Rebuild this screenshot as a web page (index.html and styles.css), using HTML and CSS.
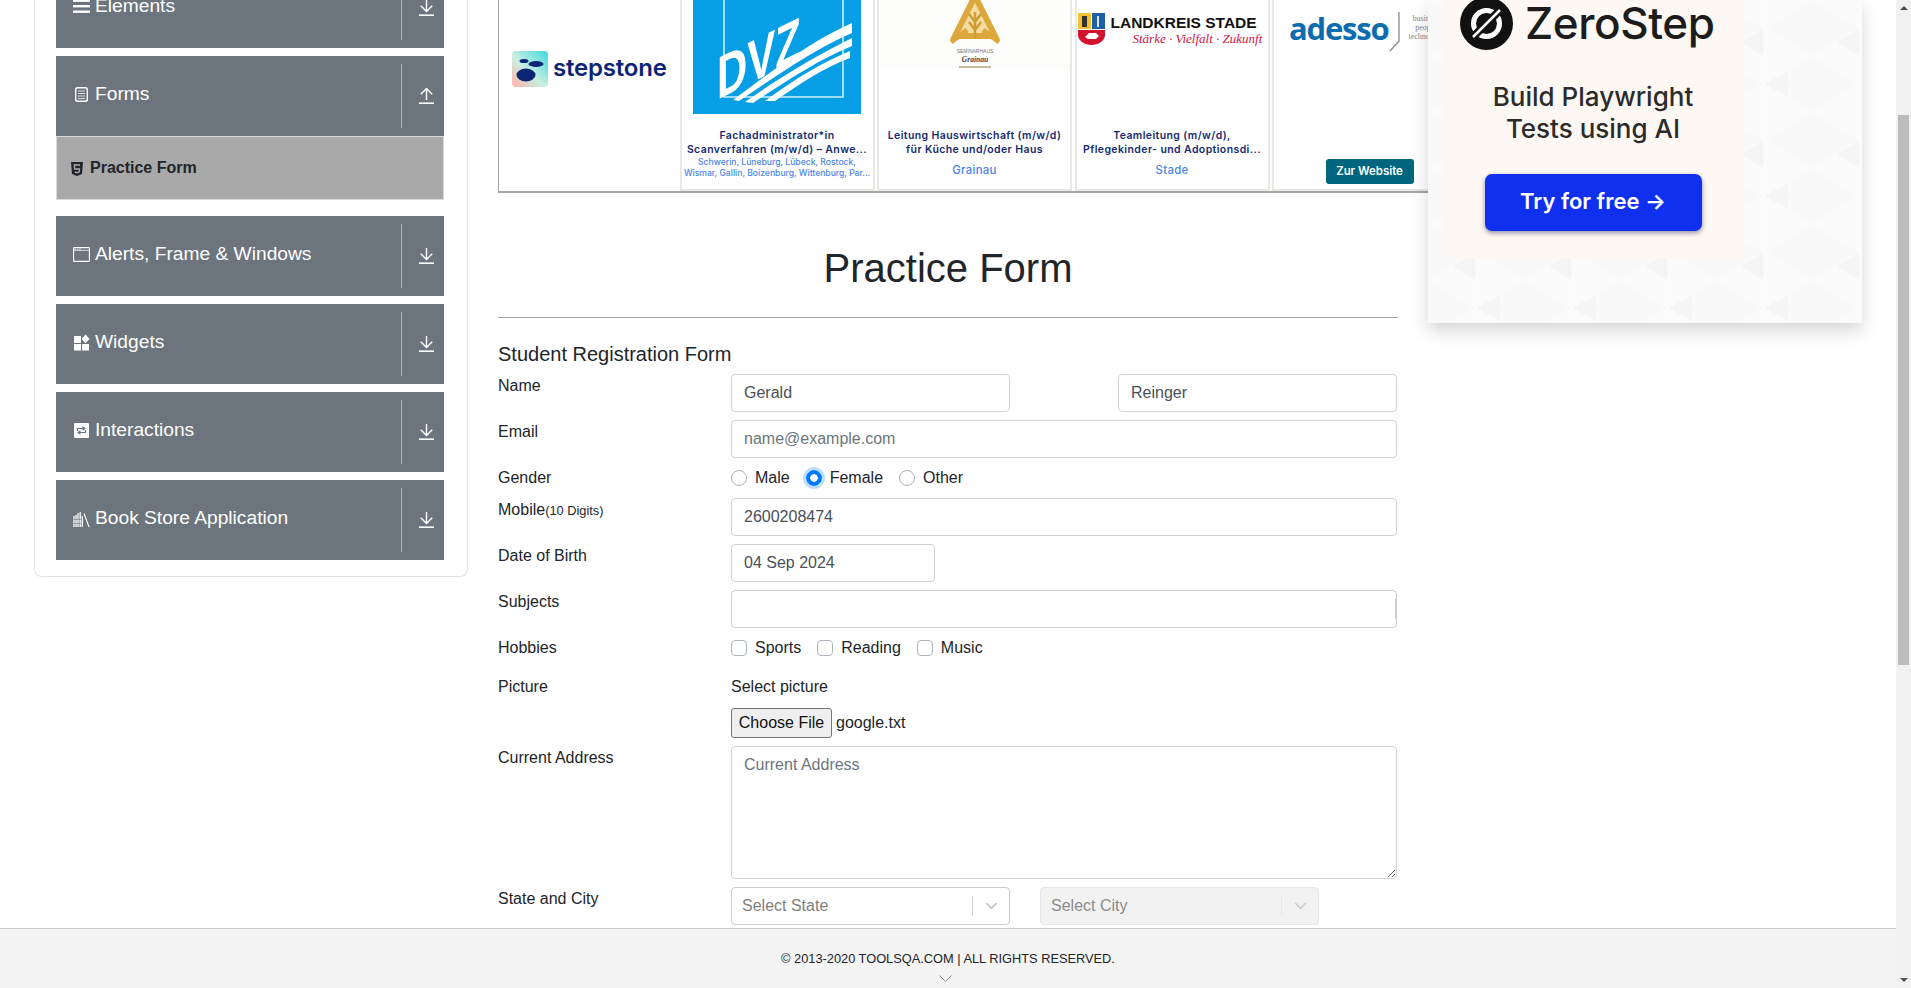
FILE: index.html
```html
<!DOCTYPE html>
<html lang="en">
<head>
<meta charset="utf-8">
<title>Practice Form</title>
<link rel="stylesheet" href="styles.css">
</head>
<body>
<div class="page">
  <div class="main">
    <aside class="sidebar">
      <div class="panel">
        <div class="item">
          <div class="item-head"><svg class="ico" viewBox="0 0 17 17"><rect y="1.5" width="17" height="2.4" fill="#fff"/><rect y="7" width="17" height="2.4" fill="#fff"/><rect y="12.5" width="17" height="2.4" fill="#fff"/></svg><span>Elements</span></div>
          <div class="item-sep"></div>
          <svg class="arrow" viewBox="0 0 15 16"><path d="M7.5 0V11.5M1.8 5.8L7.5 11.5L13.2 5.8" fill="none" stroke="#fff" stroke-width="1.4"/><rect y="14.4" width="15" height="1.6" fill="#fff"/></svg>
        </div>
        <div class="item">
          <div class="item-head"><svg class="ico" viewBox="0 0 17 17"><rect x="2.7" y="1.7" width="11.6" height="13.6" rx="1.8" fill="none" stroke="#fff" stroke-width="1.4"/><path d="M5 5H12M5 7.5H12M5 10H12M5 12.5H12" stroke="#d6d9dc" stroke-width="1"/></svg><span>Forms</span></div>
          <div class="item-sep"></div>
          <svg class="arrow" viewBox="0 0 15 16"><path d="M7.5 12V.5M1.8 6.2L7.5 .5L13.2 6.2" fill="none" stroke="#fff" stroke-width="1.4"/><rect y="14.4" width="15" height="1.6" fill="#fff"/></svg>
        </div>
        <div class="subitem">
          <svg class="ico-small" viewBox="0 0 12 14"><path d="M0 0H12L11 12L6 14L1 12Z" fill="#212529"/><path d="M9 3H3.3L3.6 7H8.4L8.1 10L6 10.8L3.9 10" fill="none" stroke="#a9a9a9" stroke-width="1.4"/></svg>
          <span>Practice Form</span>
        </div>
        <div class="item">
          <div class="item-head"><svg class="ico" viewBox="0 0 17 17"><rect x=".6" y="1.6" width="15.8" height="13.8" rx=".6" fill="none" stroke="#fff" stroke-width="1.1"/><path d="M1.4 3.2H3M3.8 3.2H5.4M6.2 3.2H7.8" stroke="#e4e6e8" stroke-width="1"/><path d="M.6 4.4H16.4" stroke="#fff" stroke-width=".7"/></svg><span>Alerts, Frame &amp; Windows</span></div>
          <div class="item-sep"></div>
          <svg class="arrow" viewBox="0 0 15 16"><path d="M7.5 0V11.5M1.8 5.8L7.5 11.5L13.2 5.8" fill="none" stroke="#fff" stroke-width="1.4"/><rect y="14.4" width="15" height="1.6" fill="#fff"/></svg>
        </div>
        <div class="item">
          <div class="item-head"><svg class="ico" viewBox="0 0 17 17"><rect x="1" y="2" width="7" height="7" fill="#fff"/><rect x="1" y="10" width="7" height="6.5" fill="#fff"/><rect x="9" y="10" width="7" height="6.5" fill="#fff"/><path d="M12.5 .5L16.5 5L12.5 9.3L8.7 5Z" fill="#fff"/></svg><span>Widgets</span></div>
          <div class="item-sep"></div>
          <svg class="arrow" viewBox="0 0 15 16"><path d="M7.5 0V11.5M1.8 5.8L7.5 11.5L13.2 5.8" fill="none" stroke="#fff" stroke-width="1.4"/><rect y="14.4" width="15" height="1.6" fill="#fff"/></svg>
        </div>
        <div class="item">
          <div class="item-head"><svg class="ico" viewBox="0 0 17 17"><rect x="1" y="1" width="15" height="15" rx="1" fill="#fff"/><path d="M4.5 9V6.5H11M9.5 4.8L11.8 6.5L9.5 8.2M12.5 8V10.5H6M7.5 8.8L5.2 10.5L7.5 12.2" fill="none" stroke="#6c757d" stroke-width="1.2"/></svg><span>Interactions</span></div>
          <div class="item-sep"></div>
          <svg class="arrow" viewBox="0 0 15 16"><path d="M7.5 0V11.5M1.8 5.8L7.5 11.5L13.2 5.8" fill="none" stroke="#fff" stroke-width="1.4"/><rect y="14.4" width="15" height="1.6" fill="#fff"/></svg>
        </div>
        <div class="item">
          <div class="item-head"><svg class="ico" viewBox="0 0 17 17"><path d="M1 6V17M3 5V17M5 3V17M7.2 2V17M9.3 6V17" stroke="#fff" stroke-width="1.3" fill="none"/><path d="M11 3.5L16 17" stroke="#fff" stroke-width="1.1"/><path d="M.5 9.5H8M.5 13.5H8" stroke="#6c757d" stroke-width=".6"/></svg><span>Book Store Application</span></div>
          <div class="item-sep"></div>
          <svg class="arrow" viewBox="0 0 15 16"><path d="M7.5 0V11.5M1.8 5.8L7.5 11.5L13.2 5.8" fill="none" stroke="#fff" stroke-width="1.4"/><rect y="14.4" width="15" height="1.6" fill="#fff"/></svg>
        </div>
      </div>
    </aside>

    <section class="center">
      <div class="strip">
        <div class="logo-cell">
          <svg class="step-icon" viewBox="0 0 36 36"><defs><linearGradient id="stepg" x1="1" y1="0" x2="0" y2="1"><stop offset="0" stop-color="#3fd8e0"/><stop offset=".55" stop-color="#c8efe0"/><stop offset="1" stop-color="#ffb1a8"/></linearGradient></defs><rect width="36" height="36" rx="4" fill="url(#stepg)"/><ellipse cx="12" cy="10" rx="4.5" ry="2" fill="#0c2577"/><ellipse cx="24" cy="13" rx="7.5" ry="3" fill="#0c2577"/><ellipse cx="14" cy="24" rx="9.5" ry="6.5" fill="#0c2577"/></svg>
          <span class="step-name">stepstone</span>
        </div>
        <article class="card">
          <div class="media">
            <svg class="dvz" viewBox="0 0 168 114"><rect width="168" height="114" fill="#069fe5"/><path d="M31 0V97H150V0" fill="none" stroke="#cdeefb" stroke-width="1.6"/><text class="dvz-text" transform="matrix(1 -.5 0 1 24 100)" textLength="84" lengthAdjust="spacingAndGlyphs">DVZ</text><path d="M40 100C80 70 120 40 159 23L159 33C120 50 85 75 46 101Z" fill="#fff"/><path d="M52 102C90 75 125 55 159 38L159 46C125 60 95 80 60 103Z" fill="#fff"/><path d="M72 101C100 80 130 62 157 51L157 58C130 68 105 85 82 101Z" fill="#fff"/></svg>
          </div>
          <h3 class="card-title">Fachadministrator*in Scanverfahren (m/w/d) – Anwe...</h3>
          <p class="card-sub">Schwerin, Lüneburg, Lübeck, Rostock,<br>Wismar, Gallin, Boizenburg, Wittenburg, Par...</p>
        </article>
        <article class="card">
          <div class="media media-tint">
            <svg class="grain" viewBox="0 0 60 69"><path d="M30 -4L50 36H10Z" fill="#f3dc9e" stroke="#dca83c" stroke-width="6"/><path d="M30 12V38M24 22L30 30L36 22M24 14L30 22L36 14" fill="none" stroke="#cf9c36" stroke-width="2.5"/><path d="M6 42L22 30M54 42L38 30" stroke="#dca83c" stroke-width="5"/><text class="grain-a" x="30" y="53" text-anchor="middle">SEMINARHAUS</text><text class="grain-b" x="30" y="62" text-anchor="middle">Grainau</text><path d="M14 67H46" stroke="#8a7a4a" stroke-width="1"/></svg>
          </div>
          <h3 class="card-title">Leitung Hauswirtschaft (m/w/d) für Küche und/oder Haus</h3>
          <p class="card-loc">Grainau</p>
        </article>
        <article class="card">
          <div class="media">
            <div class="stade">
              <svg class="crest" viewBox="0 0 27 32"><path d="M0 0H13V16H0Z" fill="#f2c230"/><path d="M14 0H27V16H14Z" fill="#1f5fa8"/><path d="M0 17H27V22C27 28 20 32 13.5 32C7 32 0 28 0 22Z" fill="#d3122f"/><rect x="4" y="3" width="5" height="11" fill="#333"/><rect x="19" y="3" width="2" height="11" fill="#d8e2ee"/><path d="M7 24L11 20L18 20L21 23L18 26L10 26Z" fill="#fff"/></svg>
              <div class="stade-text"><span class="stade-name">LANDKREIS STADE</span><span class="stade-claim">Stärke · Vielfalt · Zukunft</span></div>
            </div>
          </div>
          <h3 class="card-title">Teamleitung (m/w/d), Pflegekinder- und Adoptionsdi...</h3>
          <p class="card-loc">Stade</p>
        </article>
        <article class="card card-last">
          <div class="adesso">
            <span class="adesso-name">adesso</span>
            <svg class="adesso-mark" viewBox="0 0 12 40"><path d="M10 0V29L1 39" fill="none" stroke="#8f8f8f" stroke-width="1.4"/></svg>
            <span class="adesso-tag">business.<br>people.<br>technology.</span>
          </div>
          <a class="site-btn">Zur Website</a>
        </article>
      </div>

      <form class="form">
        <h1 class="title">Practice Form</h1>
        <hr class="rule">
        <h5 class="form-title">Student Registration Form</h5>
        <div class="row">
          <label class="lbl">Name</label>
          <div class="ctl ctl-split"><input class="input input-half" value="Gerald"><input class="input input-half" value="Reinger"></div>
        </div>
        <div class="row">
          <label class="lbl">Email</label>
          <div class="ctl"><input class="input" placeholder="name@example.com"></div>
        </div>
        <div class="row">
          <label class="lbl">Gender</label>
          <div class="ctl ctl-checks">
            <label class="check"><input class="radio" type="radio" name="g">Male</label>
            <label class="check"><input class="radio" type="radio" name="g" checked>Female</label>
            <label class="check"><input class="radio" type="radio" name="g">Other</label>
          </div>
        </div>
        <div class="row">
          <label class="lbl">Mobile<small class="hint">(10 Digits)</small></label>
          <div class="ctl"><input class="input" value="2600208474"></div>
        </div>
        <div class="row">
          <label class="lbl">Date of Birth</label>
          <div class="ctl"><input class="input input-date" value="04 Sep 2024"></div>
        </div>
        <div class="row">
          <label class="lbl">Subjects</label>
          <div class="ctl"><div class="subjects"><span class="subject-tick"></span></div></div>
        </div>
        <div class="row">
          <label class="lbl">Hobbies</label>
          <div class="ctl ctl-checks">
            <label class="check"><input class="box" type="checkbox">Sports</label>
            <label class="check"><input class="box" type="checkbox">Reading</label>
            <label class="check"><input class="box" type="checkbox">Music</label>
          </div>
        </div>
        <div class="row row-picture">
          <label class="lbl">Picture</label>
          <div class="ctl ctl-stack">
            <span class="pic-label">Select picture</span>
            <div class="file"><button class="file-btn" type="button">Choose File</button><span>google.txt</span></div>
          </div>
        </div>
        <div class="row">
          <label class="lbl">Current Address</label>
          <div class="ctl"><textarea class="area" placeholder="Current Address"></textarea></div>
        </div>
        <div class="row">
          <label class="lbl">State and City</label>
          <div class="ctl ctl-selects">
            <div class="select"><span class="select-text">Select State</span><span class="select-sep"></span><svg class="chev" viewBox="0 0 14 8"><path d="M1.5 1L7 6.5L12.5 1" fill="none" stroke="#c4c4c4" stroke-width="1.8"/></svg></div>
            <div class="select select-off"><span class="select-text">Select City</span><span class="select-sep"></span><svg class="chev" viewBox="0 0 14 8"><path d="M1.5 1L7 6.5L12.5 1" fill="none" stroke="#ccc" stroke-width="1.8"/></svg></div>
          </div>
        </div>
      </form>
    </section>

    <aside class="promo">
      <svg class="promo-bg" width="100%" height="100%"><defs><pattern id="tri" width="96" height="112" patternUnits="userSpaceOnUse"><rect width="96" height="112" fill="#fbfbfb"/><path d="M0 0L48 28L0 56ZM96 0V56L48 28ZM48 84L96 56V112ZM48 84L0 112V56Z" fill="#f9f9f9"/><path d="M48 28L24 42L48 56ZM72 70L48 84L72 98Z" fill="#f5f5f5"/><path d="M0 0L96 56M96 0L0 56M0 56L96 112M96 56L0 112M48 0V112" stroke="#fefefe" stroke-width="1"/></pattern></defs><rect width="100%" height="100%" fill="url(#tri)"/></svg>
      <div class="promo-card">
        <div class="zs-head">
          <svg class="zs-logo" viewBox="0 0 53 53"><circle cx="26.5" cy="26.5" r="26.5" fill="#111"/><circle cx="26.5" cy="26.5" r="13" fill="none" stroke="#fff" stroke-width="5"/><path d="M13 40L40 13" stroke="#111" stroke-width="8"/><path d="M13 40L40 13" stroke="#fff" stroke-width="2.5"/></svg>
          <span class="zs-name">ZeroStep</span>
        </div>
        <p class="zs-copy">Build Playwright<br>Tests using AI</p>
        <a class="zs-btn">Try for free →</a>
      </div>
    </aside>
  </div>
  <footer class="footer">
    <span class="footer-text">© 2013-2020 TOOLSQA.COM | ALL RIGHTS RESERVED.</span>
    <svg class="footer-chev" viewBox="0 0 13 7"><path d="M.5 .5L6.5 6.5L12.5 .5" fill="none" stroke="#8a8a8a" stroke-width="1"/></svg>
  </footer>
</div>
<div class="scrollbar">
  <span class="sb-up"></span>
  <span class="sb-thumb"></span>
  <span class="sb-down"></span>
</div>
</body>
</html>
```

FILE: styles.css
```css
* { box-sizing: border-box; }
html, body { margin: 0; height: 100%; }
body {
  display: flex;
  height: 988px;
  overflow: hidden;
  background: #fff;
  color: #212529;
  font: 16px/24px "Liberation Sans", Arial, sans-serif;
}
.page { flex: 1; min-width: 0; display: flex; flex-direction: column; }
.main { flex: 1; min-height: 0; display: flex; overflow: hidden; padding-left: 34px; }

/* sidebar */
.sidebar { width: 434px; flex: none; }
.panel {
  margin-top: -32px;
  padding: 0 23px 16px 21px;
  border: 1px solid #dee2e6;
  border-top: 0;
  border-radius: 8px;
  display: flex;
  flex-direction: column;
  gap: 8px;
}
.item { display: flex; flex: none; height: 80px; padding: 8px 0; background: #6c757d; color: #fff; font-size: 19.2px; }
.item-head { width: 345px; height: 60px; padding-left: 17px; display: flex; align-items: center; gap: 5px; }
.ico { width: 17px; height: 17px; flex: none; margin-top: 1px; }
.item-sep { width: 1px; height: 64px; background: #b4b9bd; }
.arrow { width: 15px; height: 16px; margin: 24px 0 0 17px; flex: none; }
.subitem {
  height: 64px;
  margin: -8px 0 8px;
  padding: 0 0 1px 14px;
  display: flex;
  align-items: center;
  gap: 7px;
  background: #a9a9a9;
  border: 1px solid #d8dadd;
  font-weight: 700;
}
.ico-small { width: 12px; height: 14px; flex: none; margin-top: 3px; }

/* centre */
.center { width: 930px; margin-left: 30px; flex: none; }
.strip {
  height: 193px;
  display: flex;
  gap: 2.5px;
  overflow: hidden;
  border-left: 1px solid #a3a3a3;
  border-bottom: 2px solid #a6a6a6;
}
.logo-cell { width: 178px; flex: none; display: flex; align-items: flex-start; gap: 5px; padding: 51px 0 0 13px; }
.step-icon { width: 36px; height: 36px; flex: none; }
.step-name { font: 600 24px/34px Inter, sans-serif; color: #0c2577; letter-spacing: -.2px; }
.card {
  width: 195px;
  flex: none;
  height: 191px;
  display: flex;
  flex-direction: column;
  align-items: center;
  border: solid #e8e8e4;
  border-width: 0 2px 2px;
  font-family: Inter, sans-serif;
  text-align: center;
}
.card-last { align-items: stretch; }
.media { width: 100%; height: 114px; display: flex; justify-content: center; align-items: flex-start; flex: none; }
.media-tint { height: 69px; margin-bottom: 45px; background: #fdfdfb; }
.dvz { width: 168px; height: 114px; display: block; }
.dvz-text { font: 700 60px "Liberation Sans", sans-serif; fill: #fff; }
.grain { width: 60px; height: 69px; }
.grain-a { font: 5px "Liberation Sans", sans-serif; fill: #777; }
.grain-b { font: italic 700 7.5px "Liberation Serif", serif; fill: #444; }
.card-title { margin: 15px 0 0; padding: 0 3px; font-size: 10.5px; line-height: 14px; font-weight: 600; color: #152a72; letter-spacing: .4px; }
.card-sub { margin: 0; font-size: 8.6px; line-height: 11px; font-weight: 500; color: #4a85ee; white-space: nowrap; }
.card-loc { margin: 6px 0 0; font-size: 11.4px; line-height: 14px; font-weight: 500; color: #4a85ee; letter-spacing: .3px; }
.stade { width: 100%; display: flex; gap: 6px; padding: 13px 0 0 1px; }
.crest { width: 27px; height: 32px; flex: none; }
.stade-text { display: flex; flex-direction: column; text-align: left; }
.stade-name { font: 700 15.5px/16px "Liberation Sans", sans-serif; color: #111; white-space: nowrap; margin-top: 2px; }
.stade-claim { font: italic 13px/15px "Liberation Serif", serif; color: #d3123f; padding-left: 22px; white-space: nowrap; }
.adesso { display: flex; align-items: flex-start; padding: 12px 0 0 15px; height: 159px; flex: none; white-space: nowrap; }
.adesso-name { font: 700 31px/32px "Open Sans", sans-serif; color: #0b6db0; letter-spacing: -1.2px; }
.adesso-mark { width: 12px; height: 40px; margin: 0 7px 0 1px; flex: none; }
.adesso-tag { font: 8px/9px "Liberation Serif", serif; color: #888; margin-top: 2px; }
.site-btn {
  align-self: center;
  width: 88px;
  height: 25px;
  border-radius: 3px;
  background: #00667f;
  color: #fff;
  font-size: 11.4px;
  line-height: 25px;
  font-weight: 600;
}

/* form */
.form { width: 900px; }
.title { margin: 51px 0 0; font-size: 40px; line-height: 48px; font-weight: 400; text-align: center; }
.rule { margin: 25px 0 24px; border: 0; border-top: 1px solid #a8a8a8; }
.form-title { margin: 0 0 8px; font-size: 20px; line-height: 24px; font-weight: 400; }
.row { display: flex; margin-bottom: 8px; }
.lbl { width: 233px; flex: none; }
.hint { font-size: 12.8px; }
.ctl { width: 666px; flex: none; }
.ctl-split { display: flex; justify-content: space-between; }
.ctl-checks { display: flex; gap: 16px; }
.ctl-stack { display: flex; flex-direction: column; }
.ctl-selects { display: flex; gap: 30px; }
.input {
  display: block;
  width: 100%;
  height: 38px;
  padding: 6px 12px;
  border: 1px solid #ced4da;
  border-radius: 4px;
  background: #fff;
  color: #495057;
  font: 16px/24px "Liberation Sans", Arial, sans-serif;
}
.input::placeholder, .area::placeholder { color: #6c757d; opacity: 1; }
.input-half { width: 279px; }
.input-date { width: 204px; }
.subjects { position: relative; height: 38px; border: 1px solid #ccc; border-radius: 4px; }
.subject-tick { position: absolute; right: 0; top: 8px; width: 1px; height: 20px; background: #ccc; }
.check { display: flex; align-items: center; gap: 8px; }
.radio, .box {
  appearance: none;
  width: 16px;
  height: 16px;
  margin: 0;
  border: 1px solid #adb5bd;
  background: #fff;
  flex: none;
}
.radio { border-radius: 50%; }
.box { border-radius: 4px; }
.radio:checked {
  border-color: #007bff;
  background: radial-gradient(circle, #fff 0 3.5px, #007bff 4px);
  box-shadow: 0 0 0 3px rgba(0, 123, 255, .25);
}
.row-picture { padding-top: 7px; }
.pic-label { height: 33px; }
.file { display: flex; align-items: center; gap: 4px; height: 30px; }
.file-btn {
  width: 101px;
  height: 30px;
  padding: 0;
  border: 1px solid #767676;
  border-radius: 3px;
  background: #efefef;
  color: #111;
  font: 16px "Liberation Sans", Arial, sans-serif;
}
.area {
  display: block;
  width: 100%;
  height: 133px;
  padding: 6px 12px;
  border: 1px solid #ced4da;
  border-radius: 4px;
  color: #495057;
  font: 16px/24px "Liberation Sans", Arial, sans-serif;
}
.select {
  width: 279px;
  height: 38px;
  display: flex;
  align-items: center;
  padding-left: 10px;
  border: 1px solid #ccc;
  border-radius: 4px;
  background: #fff;
  color: #808080;
}
.select-text { width: 230px; flex: none; }
.select-sep { width: 1px; height: 20px; background: #ccc; flex: none; }
.chev { width: 13px; height: 8px; margin-left: 12px; flex: none; }
.select-off { background: #f2f2f2; border-color: #e6e6e6; color: #8c8c8c; }
.select-off .select-sep { background: #e6e6e6; }

/* promo */
.promo {
  position: relative;
  width: 434px;
  height: 323px;
  flex: none;
  padding-left: 15px;
  box-shadow: 0 8px 16px rgba(0, 0, 0, .16);
}
.promo-bg { position: absolute; inset: 0; }
.promo-card {
  position: relative;
  width: 300px;
  height: 258px;
  display: flex;
  flex-direction: column;
  align-items: center;
  background: #fdf8f3;
  font-family: Inter, sans-serif;
}
.zs-head { width: 100%; display: flex; align-items: center; gap: 12px; margin-top: -3px; padding-left: 17px; }
.zs-logo { width: 53px; height: 53px; flex: none; }
.zs-name { font-size: 44px; line-height: 53px; font-weight: 500; color: #1c1c1c; letter-spacing: -.4px; }
.zs-copy { margin: 31px 0 0; font-size: 26px; line-height: 32px; font-weight: 500; color: #2b2b2b; text-align: center; }
.zs-btn {
  width: 217px;
  height: 57px;
  margin-top: 29px;
  border-radius: 7px;
  background: #1030f0;
  color: #fff;
  font-size: 22px;
  line-height: 55px;
  font-weight: 600;
  text-align: center;
  box-shadow: 0 2px 5px rgba(40, 40, 90, .5);
}

/* footer */
.footer {
  height: 60px;
  flex: none;
  display: flex;
  flex-direction: column;
  align-items: center;
  padding-top: 20px;
  border-top: 1px solid #c8c8c8;
  background: #f4f4f4;
  font-size: 12.8px;
  line-height: 20px;
}
.footer-chev { width: 13px; height: 7px; margin: 6px 5px 0 0; }

/* scrollbar */
.scrollbar { width: 15px; flex: none; position: relative; background: #f1f1f1; display: flex; flex-direction: column; align-items: center; }
.sb-up { margin-top: 6px; border: solid transparent; border-width: 0 4px 4px; border-bottom-color: #505050; }
.sb-thumb { width: 11px; height: 550px; margin-top: 105px; background: #bcbcbc; }
.sb-down { margin-top: auto; margin-bottom: 6px; border: solid transparent; border-width: 4px 4px 0; border-top-color: #505050; }
```
